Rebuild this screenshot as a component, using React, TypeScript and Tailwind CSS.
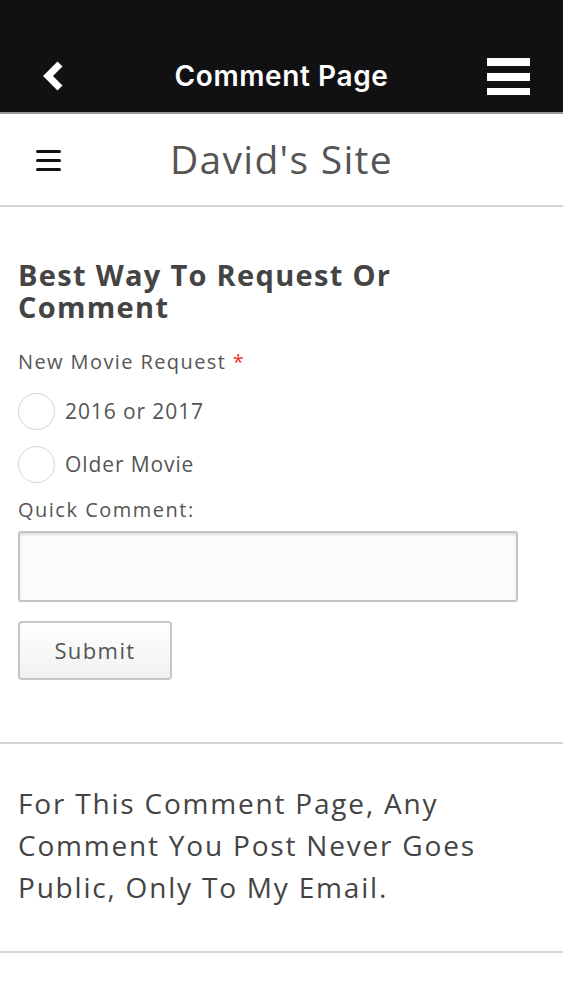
import React from 'react'

function BackChevron() {
  return (
    <svg width="26" height="30" viewBox="0 0 26 30" aria-hidden="true">
      <path d="M20 3 L8 15 L20 27" fill="none" stroke="#fff" strokeWidth="7" strokeLinejoin="miter" />
    </svg>
  )
}

function BigMenu() {
  return (
    <div className="flex w-[43px] flex-col gap-[7px]">
      <span className="h-[8px] w-full bg-white" />
      <span className="h-[8px] w-full bg-white" />
      <span className="h-[7px] w-full bg-white" />
    </div>
  )
}

function SmallMenu() {
  return (
    <div className="flex w-[25px] flex-col gap-[6px]">
      <span className="h-[3px] w-full rounded-sm bg-[#111]" />
      <span className="h-[3px] w-full rounded-sm bg-[#111]" />
      <span className="h-[3px] w-full rounded-sm bg-[#111]" />
    </div>
  )
}

function Radio({ label }: { label: string }) {
  return (
    <label className="flex items-center gap-[10px]">
      <span className="h-[37px] w-[37px] rounded-full border border-[#d6d6d6] bg-white" />
      <span className="text-[21px] tracking-[0.9px] text-[#555]">{label}</span>
    </label>
  )
}

export default function App() {
  return (
    <div className="min-h-[1000px] bg-white font-['Open_Sans',sans-serif]">
      {/* app bar */}
      <header className="h-[112px] bg-[#111113] pt-[40px]">
        <div className="flex h-[72px] items-center justify-between pl-[40px] pr-[33px]">
          <BackChevron />
          <h1 className="ml-[10px] font-['Inter',sans-serif] text-[28px] font-semibold tracking-[0.6px] text-white">Comment Page</h1>
          <BigMenu />
        </div>
      </header>

      {/* site header */}
      <div className="relative flex h-[95px] items-center justify-center border-y-2 border-t-[#9a9a9a] border-b-[#d4d4d4]">
        <div className="absolute left-[36px] top-[36px]">
          <SmallMenu />
        </div>
        <span className="text-[39px] tracking-[1.3px] text-[#555]">David's Site</span>
      </div>

      <main className="px-[18px] pt-[52px]">
        <h2 className="max-w-[500px] text-[29px] font-bold leading-[32px] tracking-[1.3px] text-[#444]">Best Way To Request Or Comment</h2>

        <div className="mt-[24px] text-[20px] tracking-[1.4px] text-[#555]">
          New Movie Request <span className="text-[#e32]">*</span>
        </div>

        <div className="mt-[16px] flex flex-col gap-[16px]">
          <Radio label="2016 or 2017" />
          <Radio label="Older Movie" />
        </div>

        <div className="mt-[12px] text-[20px] tracking-[1.5px] text-[#555]">Quick Comment:</div>
        <div className="mt-[6px] h-[71px] w-[500px] rounded-[3px] border-2 border-[#c4c4c4] bg-[#fafbfb] shadow-[inset_0_2px_3px_rgba(0,0,0,0.12)]" />

        <button className="mt-[19px] h-[59px] w-[154px] rounded-[4px] border-2 border-[#c6c6c6] bg-gradient-to-b from-white to-[#f1f1f1] text-[22px] tracking-[1.4px] text-[#555]">
          Submit
        </button>
      </main>

      <div className="mt-[62px] border-t-2 border-[#d6d6d6]" />

      <p className="px-[18px] pb-[43px] pt-[38px] text-[28px] leading-[42px] tracking-[1.8px] text-[#444]">
        For This Comment Page, Any Comment You Post Never Goes Public, Only To My Email.
      </p>

      <div className="border-t-2 border-[#d6d6d6]" />
    </div>
  )
}
